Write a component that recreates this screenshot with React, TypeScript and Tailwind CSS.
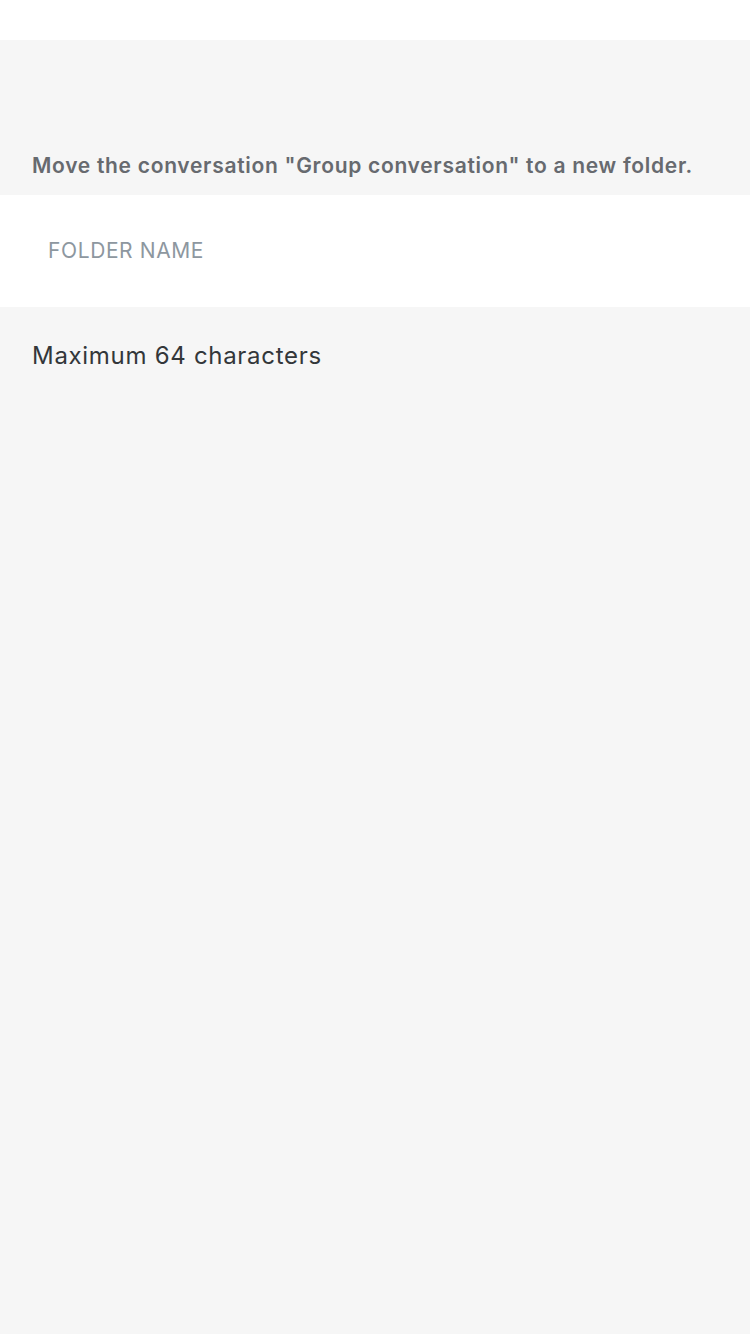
export default function App() {
  return (
    <div className="w-[750px] h-[1334px] flex flex-col bg-white" style={{ fontFamily: "Inter, 'Noto Sans', sans-serif" }}>
      <div className="h-[40px] bg-white" />
      <div className="flex-1 flex flex-col bg-[#f6f6f6]">
        <div className="h-[155px] flex items-end px-[32px] pb-[17px]">
          <p className="text-[21px] leading-[24px] font-semibold tracking-[0.7px] text-[#676a6f] whitespace-nowrap">
            Move the conversation "Group conversation" to a new folder.
          </p>
        </div>
        <div className="h-[112px] bg-white flex items-center px-[48px]">
          <input
            className="w-full outline-none bg-transparent text-[21px] tracking-[0.6px] text-[#33373a] placeholder:text-[#8d979f]"
            placeholder="FOLDER NAME"
          />
        </div>
        <div className="px-[32px] pt-[35px]">
          <p className="text-[24px] leading-[28px] tracking-[0.7px] text-[#33373a]">Maximum 64 characters</p>
        </div>
      </div>
    </div>
  );
}
